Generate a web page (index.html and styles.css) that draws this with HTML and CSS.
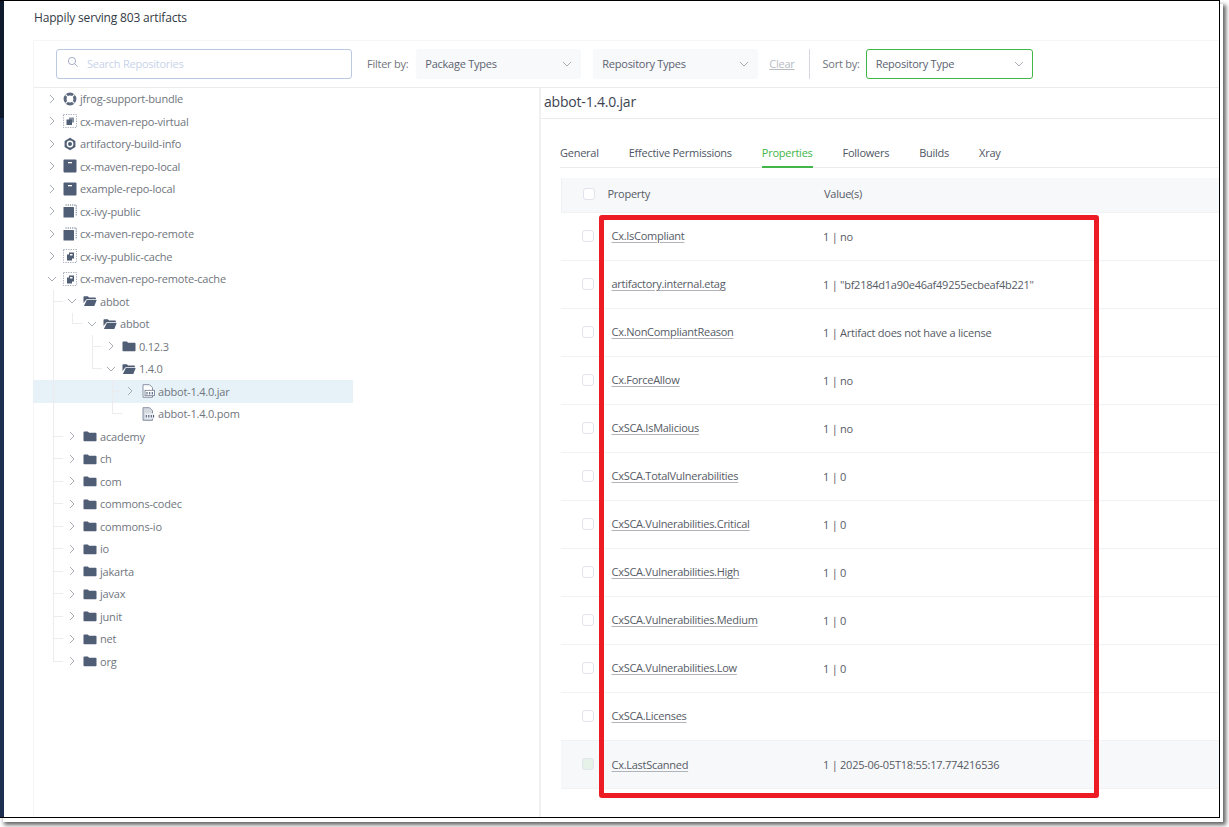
FILE: index.html
```html
<!DOCTYPE html>
<html lang="en">
<head>
    <meta charset="UTF-8">
    <meta name="viewport" content="width=device-width, initial-scale=1.0">
    <title>Artifact Repository Browser</title>
    <link rel="stylesheet" href="styles.css">
</head>
<body>
    <svg class="icon-defs" width="0" height="0">
        <symbol id="i-chev-r" viewBox="0 0 8 10"><path d="M2 1l4 4-4 4" fill="none" stroke="#a9adb5" stroke-width="1"/></symbol>
        <symbol id="i-chev-d" viewBox="0 0 10 8"><path d="M1 2l4 4 4-4" fill="none" stroke="#a9adb5" stroke-width="1"/></symbol>
        <symbol id="i-bundle" viewBox="0 0 14 14"><circle cx="7" cy="7" r="4.9" fill="none" stroke="#5c687d" stroke-width="3"/><path d="M2.500 2.500l2.400 2.400M11.500 2.500L9.100 4.900M2.500 11.500l2.400-2.400M11.500 11.500L9.100 9.100" stroke="#fff" stroke-width="1.100"/></symbol>
        <symbol id="i-virtual" viewBox="0 0 14 14"><rect x=".5" y=".5" width="13" height="13" fill="none" stroke="#7a8496" stroke-width=".7" stroke-dasharray="1.200 1.200"/><rect x="6" y="3.500" width="5" height="5" fill="#8792a5"/><rect x="3.500" y="5.500" width="5.500" height="5.500" fill="#4f5d75"/></symbol>
        <symbol id="i-build" viewBox="0 0 14 14"><path d="M7 .8l5.400 3.100v6.200L7 13.200l-5.400-3.100V3.900z" fill="#4f5d75"/><circle cx="7" cy="7" r="3.400" fill="#fff"/><circle cx="7" cy="7" r="2" fill="#4f5d75"/></symbol>
        <symbol id="i-local" viewBox="0 0 14 14"><rect x=".5" y=".5" width="13" height="13" rx="1" fill="#4f5d75"/><rect x="5" y="3" width="4" height="1.300" fill="#fff"/></symbol>
        <symbol id="i-remote" viewBox="0 0 14 14"><rect x=".5" y="3" width="10.500" height="10.500" rx=".6" fill="#4f5d75"/><path d="M2.500 1h10.700v10.500" fill="none" stroke="#4f5d75" stroke-width=".9" stroke-dasharray="1.200 1"/></symbol>
        <symbol id="i-cached" viewBox="0 0 14 14"><rect x=".5" y=".5" width="13" height="13" fill="none" stroke="#7a8496" stroke-width=".7" stroke-dasharray="1.200 1.200"/><path d="M4 5.500h2V3.500h5v6H9v2H4z" fill="#4f5d75"/><rect x="7" y="5" width="2.500" height="1.500" fill="#fff"/></symbol>
        <symbol id="i-folder" viewBox="0 0 14 14"><path d="M.5 3.200c0-.5.3-.8.8-.8h3.500l1.300 1.400h6.600c.5 0 .8.300.8.800v6.800c0 .5-.3.800-.8.800H1.300c-.5 0-.8-.3-.8-.8z" fill="#4f5d75"/></symbol>
        <symbol id="i-open" viewBox="0 0 14 14"><path d="M.5 3c0-.5.3-.8.8-.8h3.500l1.300 1.300h6c.5 0 .8.300.8.800v.9H3.500L.5 9z" fill="#4f5d75"/><path d="M3.800 6h9.900l-2.400 6H.9z" fill="#4f5d75"/></symbol>
        <symbol id="i-jar" viewBox="0 0 14 14"><path d="M2 .7h6.500l3 3v9.600H2z" fill="#fff" stroke="#7d8798" stroke-width=".9"/><rect x="4" y="6.300" width="9.500" height="5.400" fill="#fff" stroke="#6c7688" stroke-width=".8"/><path d="M6 8v2.400M8.700 8v2.400M11.300 8v2.400" stroke="#4f5d75" stroke-width="1.100"/></symbol>
        <symbol id="i-pom" viewBox="0 0 14 14"><path d="M2 .7h6.500l3 3v9.600H2z" fill="#d5dae1" stroke="#7d8798" stroke-width=".9"/><rect x="4" y="6.300" width="9.500" height="5.400" fill="#eef0f3"/><path d="M5.300 8v2.400M7.800 8v2.400M10.300 8v2.400M12.500 8v2.400" stroke="#4f5d75" stroke-width="1.100"/></symbol>
        <symbol id="i-search" viewBox="0 0 12 12"><circle cx="5" cy="5" r="3.600" fill="none" stroke="#9aa5bd" stroke-width=".9"/><path d="M7.700 7.700l3 3" stroke="#9aa5bd" stroke-width=".9"/></symbol>
    </svg>

    <div class="window">
        <div class="rail"></div>
        <main class="content">
            <div class="page-title">Happily serving 803 artifacts</div>

            <div class="card">
                <!-- Filters -->
                <div class="toolbar">
                    <div class="search">
                        <svg class="search-icon"><use href="#i-search"/></svg>
                        <span>Search Repositories</span>
                    </div>
                    <span class="label filter-label">Filter by:</span>
                    <div class="select pkg"><span>Package Types</span><svg class="chev"><use href="#i-chev-d"/></svg></div>
                    <div class="select repo"><span>Repository Types</span><svg class="chev"><use href="#i-chev-d"/></svg></div>
                    <a class="clear">Clear</a>
                    <div class="divider"></div>
                    <span class="label">Sort by:</span>
                    <div class="select sort"><span>Repository Type</span><svg class="chev"><use href="#i-chev-d"/></svg></div>
                </div>

                <div class="panes">
                    <!-- Tree -->
                    <div class="tree">
                        <div class="row d0"><svg class="arrow"><use href="#i-chev-r"/></svg><svg class="ico"><use href="#i-bundle"/></svg><span>jfrog-support-bundle</span></div>
                        <div class="row d0"><svg class="arrow"><use href="#i-chev-r"/></svg><svg class="ico"><use href="#i-virtual"/></svg><span>cx-maven-repo-virtual</span></div>
                        <div class="row d0"><svg class="arrow"><use href="#i-chev-r"/></svg><svg class="ico"><use href="#i-build"/></svg><span>artifactory-build-info</span></div>
                        <div class="row d0"><svg class="arrow"><use href="#i-chev-r"/></svg><svg class="ico"><use href="#i-local"/></svg><span>cx-maven-repo-local</span></div>
                        <div class="row d0"><svg class="arrow"><use href="#i-chev-r"/></svg><svg class="ico"><use href="#i-local"/></svg><span>example-repo-local</span></div>
                        <div class="row d0"><svg class="arrow"><use href="#i-chev-r"/></svg><svg class="ico"><use href="#i-remote"/></svg><span>cx-ivy-public</span></div>
                        <div class="row d0"><svg class="arrow"><use href="#i-chev-r"/></svg><svg class="ico"><use href="#i-remote"/></svg><span>cx-maven-repo-remote</span></div>
                        <div class="row d0"><svg class="arrow"><use href="#i-chev-r"/></svg><svg class="ico"><use href="#i-cached"/></svg><span>cx-ivy-public-cache</span></div>
                        <div class="row d0"><svg class="arrow down"><use href="#i-chev-d"/></svg><svg class="ico"><use href="#i-cached"/></svg><span>cx-maven-repo-remote-cache</span></div>
                        <div class="row d1"><svg class="arrow down"><use href="#i-chev-d"/></svg><svg class="ico"><use href="#i-open"/></svg><span>abbot</span></div>
                        <div class="row d2 last"><svg class="arrow down"><use href="#i-chev-d"/></svg><svg class="ico"><use href="#i-open"/></svg><span>abbot</span></div>
                        <div class="row d3"><svg class="arrow"><use href="#i-chev-r"/></svg><svg class="ico"><use href="#i-folder"/></svg><span>0.12.3</span></div>
                        <div class="row d3 last"><svg class="arrow down"><use href="#i-chev-d"/></svg><svg class="ico"><use href="#i-open"/></svg><span>1.4.0</span></div>
                        <div class="row d4 selected"><svg class="arrow"><use href="#i-chev-r"/></svg><svg class="ico"><use href="#i-jar"/></svg><span>abbot-1.4.0.jar</span></div>
                        <div class="row d4 last"><span class="arrow"></span><svg class="ico"><use href="#i-pom"/></svg><span>abbot-1.4.0.pom</span></div>
                        <div class="row d1"><svg class="arrow"><use href="#i-chev-r"/></svg><svg class="ico"><use href="#i-folder"/></svg><span>academy</span></div>
                        <div class="row d1"><svg class="arrow"><use href="#i-chev-r"/></svg><svg class="ico"><use href="#i-folder"/></svg><span>ch</span></div>
                        <div class="row d1"><svg class="arrow"><use href="#i-chev-r"/></svg><svg class="ico"><use href="#i-folder"/></svg><span>com</span></div>
                        <div class="row d1"><svg class="arrow"><use href="#i-chev-r"/></svg><svg class="ico"><use href="#i-folder"/></svg><span>commons-codec</span></div>
                        <div class="row d1"><svg class="arrow"><use href="#i-chev-r"/></svg><svg class="ico"><use href="#i-folder"/></svg><span>commons-io</span></div>
                        <div class="row d1"><svg class="arrow"><use href="#i-chev-r"/></svg><svg class="ico"><use href="#i-folder"/></svg><span>io</span></div>
                        <div class="row d1"><svg class="arrow"><use href="#i-chev-r"/></svg><svg class="ico"><use href="#i-folder"/></svg><span>jakarta</span></div>
                        <div class="row d1"><svg class="arrow"><use href="#i-chev-r"/></svg><svg class="ico"><use href="#i-folder"/></svg><span>javax</span></div>
                        <div class="row d1"><svg class="arrow"><use href="#i-chev-r"/></svg><svg class="ico"><use href="#i-folder"/></svg><span>junit</span></div>
                        <div class="row d1"><svg class="arrow"><use href="#i-chev-r"/></svg><svg class="ico"><use href="#i-folder"/></svg><span>net</span></div>
                        <div class="row d1 last"><svg class="arrow"><use href="#i-chev-r"/></svg><svg class="ico"><use href="#i-folder"/></svg><span>org</span></div>
                    </div>

                    <!-- Details -->
                    <div class="details">
                        <h2 class="file-name">abbot-1.4.0.jar</h2>
                        <div class="tabs">
                            <a class="tab">General</a>
                            <a class="tab">Effective Permissions</a>
                            <a class="tab active">Properties</a>
                            <a class="tab">Followers</a>
                            <a class="tab">Builds</a>
                            <a class="tab">Xray</a>
                        </div>
                        <div class="props">
                            <div class="prop head"><span class="check"></span><span class="name">Property</span><span class="value">Value(s)</span></div>
                            <div class="prop"><span class="check"></span><span class="name"><u>Cx.IsCompliant</u></span><span class="value">1 | no</span></div>
                            <div class="prop"><span class="check"></span><span class="name"><u>artifactory.internal.etag</u></span><span class="value">1 | "bf2184d1a90e46af49255ecbeaf4b221"</span></div>
                            <div class="prop"><span class="check"></span><span class="name"><u>Cx.NonCompliantReason</u></span><span class="value">1 | Artifact does not have a license</span></div>
                            <div class="prop"><span class="check"></span><span class="name"><u>Cx.ForceAllow</u></span><span class="value">1 | no</span></div>
                            <div class="prop"><span class="check"></span><span class="name"><u>CxSCA.IsMalicious</u></span><span class="value">1 | no</span></div>
                            <div class="prop"><span class="check"></span><span class="name"><u>CxSCA.TotalVulnerabilities</u></span><span class="value">1 | 0</span></div>
                            <div class="prop"><span class="check"></span><span class="name"><u>CxSCA.Vulnerabilities.Critical</u></span><span class="value">1 | 0</span></div>
                            <div class="prop"><span class="check"></span><span class="name"><u>CxSCA.Vulnerabilities.High</u></span><span class="value">1 | 0</span></div>
                            <div class="prop"><span class="check"></span><span class="name"><u>CxSCA.Vulnerabilities.Medium</u></span><span class="value">1 | 0</span></div>
                            <div class="prop"><span class="check"></span><span class="name"><u>CxSCA.Vulnerabilities.Low</u></span><span class="value">1 | 0</span></div>
                            <div class="prop"><span class="check"></span><span class="name"><u>CxSCA.Licenses</u></span><span class="value"></span></div>
                            <div class="prop hover"><span class="check"></span><span class="name"><u>Cx.LastScanned</u></span><span class="value">1 | 2025-06-05T18:55:17.774216536</span></div>
                        </div>
                    </div>
                </div>
            </div>
        </main>

        <!-- Annotation drawn on the screenshot -->
        <div class="annotation"></div>
    </div>
</body>
</html>
```

FILE: styles.css
```css
* {
    box-sizing: border-box;
}
body {
    margin: 0;
    padding: 0;
    background: #fff;
    font-family: "Open Sans", sans-serif;
    font-size: 11px;
    letter-spacing: -0.25px;
    color: #5b6270;
}
.icon-defs {
    position: absolute;
}
.window {
    position: relative;
    display: flex;
    width: 1220px;
    height: 818px;
    overflow: hidden;
    background: #fff;
    border-top: 1px solid #000;
    border-right: 1px solid #000;
    border-bottom: 1px solid #000;
}
/* screenshot drop shadow */
body::after {
    content: "";
    position: absolute;
    left: 3px;
    top: 4px;
    width: 1220px;
    height: 818px;
    z-index: -1;
    box-shadow: 2px 2px 4px 1px #666;
}
.rail {
    flex: 0 0 4px;
    background: linear-gradient(#0f1b2d 117px, #1c2f50 117px);
}
.content {
    flex: 1;
    min-width: 0;
    padding-left: 29px;
}
.page-title {
    height: 39px;
    padding: 8px 0 0 1px;
    font-size: 12px;
    line-height: 17px;
    letter-spacing: -0.17px;
    color: #333a45;
}

.card {
    border-top: 1px solid #f6f6f7;
    border-left: 1px solid #f6f6f7;
}
.toolbar {
    display: flex;
    align-items: center;
    height: 47px;
    padding: 0 0 1px 22px;
    border-bottom: 1px solid #ececec;
}
.search {
    display: flex;
    align-items: center;
    width: 296px;
    height: 30px;
    padding-left: 10px;
    border: 1px solid #bcc8e2;
    border-radius: 3px;
    color: #c8d3ea;
}
.search-icon {
    width: 12px;
    height: 12px;
    margin: -4px 8px 0 0;
}
.label {
    color: #6f747c;
}
.filter-label {
    margin-left: 15px;
    margin-right: 8px;
}
.select {
    display: flex;
    align-items: center;
    justify-content: space-between;
    width: 165px;
    height: 30px;
    padding: 0 9px 0 9px;
    border-radius: 3px;
    background: #f8f9fb;
}
.repo {
    margin-left: 12px;
}
.sort {
    width: 167px;
    margin-left: 6px;
    padding: 0 8px 0 9px;
    background: #fff;
    border: 1px solid #43b649;
}
.chev {
    width: 10px;
    height: 8px;
}
.clear {
    margin-left: 11px;
    color: #b7bbc2;
    text-decoration: underline;
}
.divider {
    width: 1px;
    height: 30px;
    margin: 0 13px 0 14px;
    background: #d4d8de;
}

.panes {
    display: flex;
    height: 730px;
}
.tree {
    flex: 0 0 508px;
    margin: -0.35px 0 0 -1px;
    border-right: 2px solid #f0f0f1;
}
.row {
    display: flex;
    align-items: center;
    width: 320px;
    height: 22.5px;
    padding-left: 15px;
    color: #70757d;
    letter-spacing: -0.2px;
    white-space: nowrap;
    background-repeat: no-repeat;
    --line: linear-gradient(#ececee, #ececee);
}
.arrow {
    flex: 0 0 8px;
    width: 8px;
    height: 10px;
    margin-right: 7px;
}
.arrow.down {
    flex-basis: 10px;
    width: 10px;
    height: 8px;
    margin: 0 6px 0 -1px;
}
.ico {
    flex: 0 0 14px;
    width: 14px;
    height: 14px;
    margin-right: 3px;
}
.d1 {
    padding-left: 35px;
    background-image: var(--line), var(--line);
    background-size: 1px 100%, 10px 1px;
    background-position: 20px 0, 20px 50%;
}
.d1.last {
    background-size: 1px 50%, 10px 1px;
}
.d2 {
    padding-left: 55px;
    background-image: var(--line), var(--line), var(--line);
    background-size: 1px 100%, 1px 50%, 10px 1px;
    background-position: 20px 0, 39px 0, 39px 50%;
}
.d3 {
    padding-left: 74px;
    background-image: var(--line), var(--line), var(--line);
    background-size: 1px 100%, 1px 100%, 10px 1px;
    background-position: 20px 0, 59px 0, 59px 50%;
}
.d3.last {
    background-size: 1px 100%, 1px 50%, 10px 1px;
}
.d4 {
    padding-left: 93px;
    background-image: var(--line), var(--line), var(--line);
    background-size: 1px 100%, 1px 100%, 10px 1px;
    background-position: 20px 0, 79px 0, 79px 50%;
}
.d4.last {
    background-size: 1px 100%, 1px 50%, 10px 1px;
}
.selected {
    background-color: #e6f2f8;
}

.details {
    flex: 1;
    min-width: 0;
}
.file-name {
    height: 31px;
    margin: 0;
    padding: 4px 0 0 3px;
    font-size: 14px;
    font-weight: 400;
    line-height: 20px;
    letter-spacing: -0.2px;
    color: #3d4450;
    border-bottom: 1px solid #ececec;
}
.tabs {
    display: flex;
    gap: 30px;
    height: 49px;
    margin: 0 0 10px 19px;
    padding-top: 25px;
    border-bottom: 1px solid #ececec;
}
.tab {
    height: 24px;
    line-height: 18px;
    color: #4f5664;
}
.tab.active {
    color: #43b649;
    border-bottom: 2px solid #43b649;
}
.props {
    margin-left: 20px;
}
.prop {
    display: flex;
    align-items: center;
    height: 48px;
    padding-left: 21px;
    border-bottom: 1px solid #f1f2f6;
    color: #565b65;
}
.prop.head {
    height: 35px;
    padding-bottom: 3px;
    background: #f7f8fa;
    border-left: 1px solid #eef0f3;
}
.prop.hover {
    background: #f7f8fa;
}
.check {
    flex: 0 0 12px;
    height: 12px;
    margin-top: -2px;
    border: 1px solid #e1e3ee;
    border-radius: 3px;
    background: #fff;
}
.head .check {
    margin-top: 0;
}
.prop.hover .check {
    background: #e6f2e8;
}
.name {
    flex: 0 0 229px;
    margin-top: -2px;
    padding-left: 17.5px;
    letter-spacing: -0.27px;
}
.head .name {
    margin-top: 0;
    padding-left: 12.500px;
}
.hover .name {
    margin-top: 0;
}
.name u {
    text-underline-offset: 2px;
    text-decoration-color: #b0b4ba;
}

.annotation {
    position: absolute;
    left: 599px;
    top: 214px;
    width: 500px;
    height: 583px;
    border: 5px solid #ed1c24;
    border-radius: 3px;
}
```
